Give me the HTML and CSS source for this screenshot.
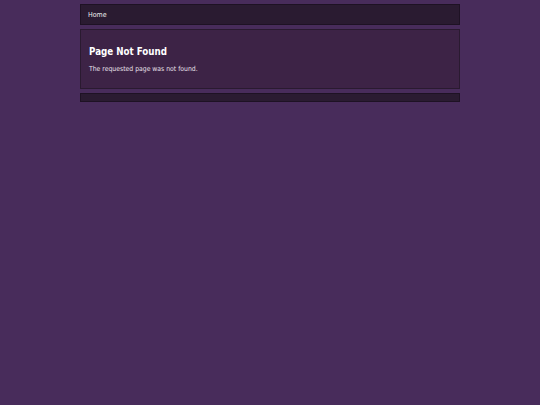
FILE: index.html
```html
<!DOCTYPE html>
<html>
<head>
<meta charset="utf-8">
<link rel="stylesheet" href="styles.css">
</head>
<body>
<div class="wrap">
  <div class="nav"><a class="nav-link" href="#">Home</a></div>
  <div class="content">
    <h1 class="title">Page Not Found</h1>
    <p class="text">The requested page was not found.</p>
  </div>
  <div class="footer"></div>
</div>
</body>
</html>
```

FILE: styles.css
```css
html, body {
  margin: 0;
  padding: 0;
  background: #482c5b;
  font-family: "DejaVu Sans Condensed", "DejaVu Sans", sans-serif;
  color: #eee;
}
.wrap {
  width: 380px;
  margin: 0 auto;
  padding-top: 4px;
  display: flex;
  flex-direction: column;
  gap: 4px;
}
.nav {
  height: 18px;
  background: #2a1b31;
  border: 1px solid #1e1224;
  display: flex;
  align-items: center;
  padding: 1px 7px 0;
  box-sizing: content-box;
}
.nav-link {
  color: #eee;
  text-decoration: none;
  font-size: 7px;
}
.content {
  height: 58px;
  background: #3d2346;
  border: 1px solid #2a1a30;
  padding: 0 8px;
  box-sizing: content-box;
}
.title {
  margin: 16px 0 0;
  font-size: 9.7px;
  font-weight: bold;
  color: #fff;
}
.text {
  margin: 8px 0 0;
  font-size: 6.8px;
  color: #e8e0ea;
}
.footer {
  height: 7px;
  background: #2a1b31;
  border: 1px solid #1e1224;
}
```
